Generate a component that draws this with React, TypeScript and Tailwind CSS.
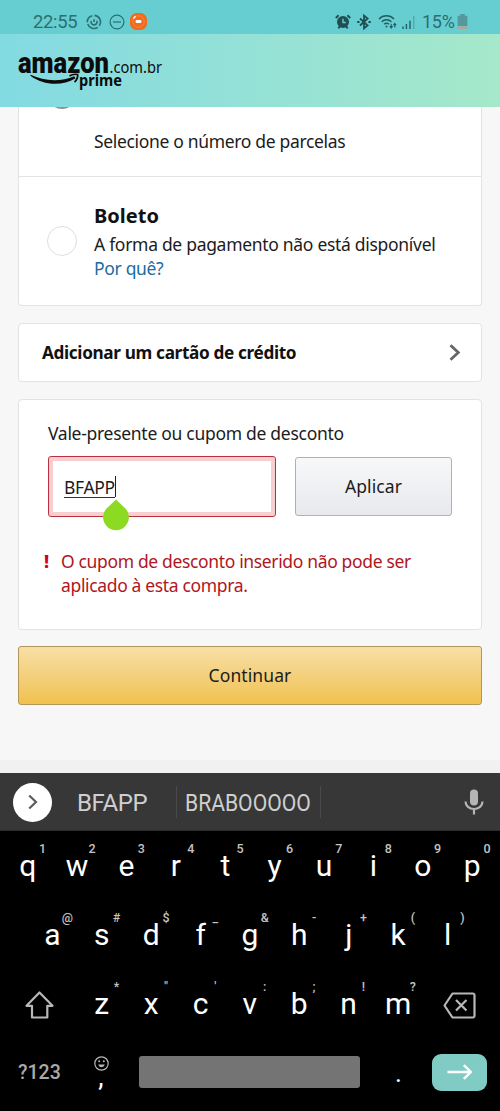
import { ReactNode } from 'react'

interface KeyDef {
  letter: string
  hint: string
}

const toKeys = (letters: string, hints: string): KeyDef[] =>
  letters.split('').map((letter, i) => ({ letter, hint: hints[i] }))

const ROW_1 = toKeys('qwertyuiop', '1234567890')
const ROW_2 = toKeys('asdfghjkl', '@#$_&-+()')
const ROW_3 = toKeys('zxcvbnm', '*"\':;!?')

function StatusBar() {
  return (
    <div className="flex h-[34px] items-center bg-[#66cdd0] pt-[9px] pl-[33px] pr-[32px] font-[Roboto,sans-serif] text-[#2c6e72]">
      <span className="w-[53px] text-[18.400px] leading-6 whitespace-nowrap">22:55</span>
      <svg className="h-[16px] w-[16px]" viewBox="0 0 16 16" fill="none" stroke="#2c6e72" strokeWidth="1.6">
        <path d="M8.500 1.400a6.600 6.600 0 0 1 4.800 10.300M11.800 13.300A6.600 6.600 0 0 1 1.700 10M1.300 8.200A6.600 6.600 0 0 1 6.300 1.700" />
        <path d="M5.200 7a3 3 0 1 0 5.600-.3M8 5.200v2.900" />
      </svg>
      <svg className="ml-[7px] h-[16px] w-[16px]" viewBox="0 0 16 16" fill="none" stroke="#2c6e72" strokeWidth="1.2">
        <circle cx="8" cy="8" r="6.900" />
        <path d="M4 8h8" />
      </svg>
      <svg className="ml-[5px] h-[17px] w-[17px]" viewBox="0 0 17 17" fill="none">
        <rect width="17" height="17" rx="6.500" fill="#f26a1b" />
        <circle cx="8.500" cy="8.500" r="5.700" stroke="#f58a45" strokeWidth="0.900" />
        <path d="M3.300 5.400 5.600 3.200" stroke="#fff" strokeWidth="1.400" />
        <rect x="5.600" y="7" width="5.800" height="3" rx="1" fill="#fff" />
      </svg>

      <div className="ml-auto flex items-center">
        <svg className="h-[16px] w-[16px]" viewBox="0 0 16 16" fill="none">
          <circle cx="8" cy="8" r="6" fill="#1f4f52" />
          <path d="M.8 4 3.600 1.300M15.200 4l-2.800-2.700M3.300 14.400l1.600-2M12.700 14.400l-1.600-2" stroke="#1f4f52" strokeWidth="1.900" />
          <path d="M8 4.800v3.700h2.800" stroke="#66cdd0" strokeWidth="1.400" />
        </svg>
        <svg className="ml-[6px] h-[16px] w-[14px]" viewBox="0 0 14 16" fill="none" stroke="#1f4f52" strokeWidth="1.800">
          <path d="m3 4.500 7.600 7L7 14.400V1.600l3.600 2.900L3 11.500" />
          <path d="M.2 8h2.300M11.500 8h2.300" />
        </svg>
        <svg className="ml-[7px] h-[16px] w-[20px]" viewBox="0 0 20 16" fill="none" stroke="#1f5f63" strokeWidth="1.500">
          <path d="M1 5c4-4.200 11-4.200 15 0M3.700 7.800c2.700-2.700 7-2.700 9.700 0M6.200 10.300c1.300-1.300 3.400-1.300 4.700 0" />
          <circle cx="8.500" cy="12.500" r="1" fill="#1f5f63" stroke="none" />
          <path d="M11.200 12h4l-2 2.900zM14.800 11.300h4l-2-2.900z" fill="#1f5f63" stroke="none" />
          <path d="M13.200 9.800v3M16.800 10.500v3" strokeWidth="1.100" />
        </svg>
        <svg className="ml-[4px] h-[14px] w-[13px]" viewBox="0 0 13 14" fill="#1f5f63">
          <path d="M.3 11.400h1.400V14H.3zM3.700 9h1.400v5H3.700zM7.300 5.800h1.400V14H7.300z" />
          <path d="M11 1h1.400v13H11z" opacity=".3" />
        </svg>
        <span className="ml-[7px] w-[35px] text-[18px] leading-6 tracking-[-0.300px] whitespace-nowrap">15%</span>
        <svg className="h-[15px] w-[11px]" viewBox="0 0 11 15">
          <path d="M3.300 0h4.400v1.700H3.300zM1.800 1.700h7.400a1.200 1.200 0 0 1 1.200 1.200V12H.6V2.900a1.200 1.200 0 0 1 1.200-1.200z" fill="#53999d" />
          <path d="M.6 12.400h9.800v1.100A1.200 1.200 0 0 1 9.200 14.700H1.800A1.200 1.200 0 0 1 .6 13.500z" fill="#c99a83" />
        </svg>
      </div>
    </div>
  )
}

function Logo() {
  return (
    <svg className="h-[57px] w-[170px]" viewBox="0 -11 170 57" fill="#0c0c0c">
      <text x="0" y="23" fontFamily="Roboto, sans-serif" fontWeight="900" fontSize="29.500" textLength="91" lengthAdjust="spacingAndGlyphs">amazon</text>
      <text x="91.500" y="23" fontFamily="Noto Sans, sans-serif" fontSize="16.500" textLength="52.500" lengthAdjust="spacingAndGlyphs">.com.br</text>
      <text x="61" y="36" fontFamily="Noto Sans, sans-serif" fontWeight="700" fontSize="16.500" textLength="43" lengthAdjust="spacingAndGlyphs">prime</text>
      <path d="M12.600 24.800C26 31.400 43 32 56.200 26.200l1.400 2C44 36.200 26 35.600 12.400 25.700z" />
      <path d="M51.500 26c2.600-1.700 6-1.900 8.100-1.500.3 2.500-.8 5.400-3 7.600" fill="none" stroke="#0c0c0c" strokeWidth="1.700" />
    </svg>
  )
}

function Card({ className, children }: { className: string; children: ReactNode }) {
  return (
    <div className={`rounded-[4px] border border-[#e3e3e3] bg-white ${className}`}>
      {children}
    </div>
  )
}

function Key({ letter, hint }: KeyDef) {
  return (
    <button type="button" className="relative h-[69px] w-[49.400px] text-center text-[30px] leading-[69px] text-white">
      {letter}
      <span className="absolute top-[5px] left-[27.500px] w-6 text-center text-[12.500px] leading-[26px] font-medium text-[#c4c4c4]">
        {hint}
      </span>
    </button>
  )
}

function Keyboard() {
  return (
    <div className="flex-1 bg-black font-[Roboto,sans-serif] tracking-normal">
      {/* suggestion strip */}
      <div className="flex h-[58px] items-center border-b border-[#2b2b2b] bg-[#373737] pt-px pl-[13px] pr-[16px] text-[24px] text-[#cfcfcf]">
        <span className="flex h-[39px] w-[39px] items-center justify-center rounded-full bg-white">
          <svg className="h-[16px] w-[10px]" viewBox="0 0 10 16" fill="none" stroke="#5c5c5c" strokeWidth="2.200">
            <path d="m1.200 1.500 6.800 6.500-6.800 6.500" />
          </svg>
        </span>
        <span className="ml-[25px] w-[99px] pt-[2px] tracking-[-0.400px] whitespace-nowrap">BFAPP</span>
        <span className="h-[32px] w-px bg-[#4a4a4a]" />
        {/* long suggestions are squeezed to fit their slot */}
        <span className="ml-[8px] w-[135px] origin-left scale-x-[0.880] pt-[2px] whitespace-nowrap">BRABOOOOO</span>
        <span className="h-[32px] w-px bg-[#4a4a4a]" />
        <svg className="ml-auto h-[26px] w-[20px]" viewBox="0 0 20 26" fill="none">
          <rect x="6" y="0.500" width="8" height="16" rx="4" fill="#b5b5b5" />
          <path d="M1.500 12.500a8.500 7.500 0 0 0 17 0M10 20v5.500" stroke="#b5b5b5" strokeWidth="2.200" />
        </svg>
      </div>

      <div className="flex justify-center">{ROW_1.map(k => <Key key={k.letter} {...k} />)}</div>
      <div className="flex justify-center">{ROW_2.map(k => <Key key={k.letter} {...k} />)}</div>
      <div className="flex">
        <div className="flex h-[69px] w-[77px] items-center pl-[25px]">
          <svg className="mt-[2px] h-[28px] w-[29px]" viewBox="0 0 29 28" fill="none" stroke="#b8b8b8" strokeWidth="2.200" strokeLinejoin="round">
            <path d="M14.500 1.500 27.500 14.800h-5.200V26.500H7V14.800H1.500z" />
          </svg>
        </div>
        {ROW_3.map(k => <Key key={k.letter} {...k} />)}
        <div className="flex h-[69px] flex-1 items-center pl-[20.500px]">
          <svg className="mt-[4px] h-[27px] w-[33px]" viewBox="0 0 33 27" fill="none" stroke="#b8b8b8" strokeWidth="2.200" strokeLinejoin="round">
            <path d="M9.500 1.500h20.300a1.700 1.700 0 0 1 1.700 1.700v20.600a1.700 1.700 0 0 1-1.700 1.700H9.500L1.500 13.500z" />
            <path d="m13 8 10.500 10.500M23.500 8 13 18.500" />
          </svg>
        </div>
      </div>
      <div className="flex h-[68px] items-center pl-[18px] pr-[13px]">
        <span className="w-[75px] pt-[2px] text-[19.500px] font-medium whitespace-nowrap text-[#a9a9a9]">?123</span>
        <div className="-mt-[6px] flex w-[16px] flex-col items-center">
          <svg className="h-[15px] w-[15px]" viewBox="0 0 15 15" fill="none" stroke="#b8b8b8" strokeWidth="1.200">
            <circle cx="7.500" cy="7.500" r="6.700" />
            <path d="M4.200 8.600a3.400 3.400 0 0 0 6.600 0z" fill="#b8b8b8" stroke="none" />
            <circle cx="5.200" cy="5.300" r="1" fill="#b8b8b8" stroke="none" />
            <circle cx="9.800" cy="5.300" r="1" fill="#b8b8b8" stroke="none" />
          </svg>
          <span className="text-[27px] leading-[12px] text-white">,</span>
        </div>
        <span className="ml-[30px] h-[32px] w-[221px] rounded-[3px] bg-[#747474]" />
        <span className="ml-[35px] mt-[2px] w-[8px] text-[26px] leading-[30px] text-white">.</span>
        <span className="ml-auto flex h-[37px] w-[55px] items-center justify-center rounded-[9px] bg-[#80cbc4]">
          <svg className="h-[16px] w-[26px]" viewBox="0 0 26 16" fill="none" stroke="#fff" strokeWidth="2.400">
            <path d="M.5 8h23M16.800 1.200 23.800 8l-7 6.800" />
          </svg>
        </span>
      </div>
    </div>
  )
}

export default function App() {
  return (
    <div className="flex h-[1111px] w-[500px] flex-col overflow-hidden bg-[#f7f7f7] font-['Noto_Sans',sans-serif] text-[17.500px] leading-[24px] tracking-[-0.330px] text-[#1c1c1c]">
      <StatusBar />
      <header className="h-[73px] bg-linear-to-r from-[#82dae2] to-[#a5e8ca] pt-[5px] pl-[18px] tracking-normal">
        <Logo />
      </header>

      <main className="h-[653px] px-[18px]">
        <div className="rounded-b-[4px] border-x border-b border-[#e3e3e3] bg-white">
          {/* bottom edge of the radio scrolled under the header */}
          <div className="h-[22px] overflow-hidden pl-[28px]">
            <div className="-mt-[28px] h-[30px] w-[30px] rounded-full border-2 border-[#8b9496]" />
          </div>
          <p className="h-[47px] pl-[75px] whitespace-nowrap">Selecione o número de parcelas</p>
          <div className="flex h-[129px] items-start border-t border-[#e3e3e3] pl-[28px]">
            <span className="mt-[49px] h-[30px] w-[30px] rounded-full border border-[#dedede]" />
            <div className="ml-[17px] pt-[26px] whitespace-nowrap">
              <h2 className="text-[20px] leading-[25px] font-bold tracking-normal text-[#111]">Boleto</h2>
              <p className="mt-[4px] tracking-[-0.300px]">A forma de pagamento não está disponível</p>
              <a className="block text-[#1b6ba3]">Por quê?</a>
            </div>
          </div>
        </div>

        <Card className="mt-[17px] flex h-[59px] items-center justify-between pl-[23px] pr-[20px]">
          <span className="text-[17.200px] font-bold tracking-[-0.350px] whitespace-nowrap text-[#111]">Adicionar um cartão de crédito</span>
          <svg className="h-[17px] w-[12px]" viewBox="0 0 12 17" fill="none" stroke="#666" strokeWidth="2.800">
            <path d="m1.500 1.200 7.800 7.300-7.800 7.300" />
          </svg>
        </Card>

        <Card className="mt-[17px] h-[231px] pt-[21px] pl-[29px]">
          <label className="block tracking-[-0.290px] whitespace-nowrap">Vale-presente ou cupom de desconto</label>
          <div className="mt-[11px] flex items-start">
            <div className="relative flex h-[61px] w-[228px] items-center rounded-[3px] border border-[#b9303f] pl-[15px] shadow-[inset_0_0_0_4px_#f8cfd0]">
              <span className="mt-px border-b border-[#333] leading-[20px] tracking-[-0.350px]">BFAPP</span>
              <span className="h-[21px] w-px bg-[#222]" />
              {/* cursor handle */}
              <svg className="absolute top-[42px] left-[53px] h-[32px] w-[28px]" viewBox="0 0 28 32" fill="#8cdb22">
                <path d="M14 .5 23.200 9.200a12.900 12.900 0 1 1-18.400 0z" />
              </svg>
            </div>
            <button type="button" className="mt-px ml-[19px] h-[59px] w-[157px] rounded-[3px] border border-[#adb1b8] bg-linear-to-b from-[#f7f8fa] to-[#e7e9ec] pb-[2px] tracking-[0.100px]">
              Aplicar
            </button>
          </div>
          <div className="mt-[32px] flex text-[#b0161e]">
            <span className="-ml-[4px] w-[17px] text-[18px] font-extrabold text-[#d0021b]">!</span>
            <p className="tracking-[-0.350px] whitespace-nowrap">
              O cupom de desconto inserido não pode ser
              <br />
              aplicado à esta compra.
            </p>
          </div>
        </Card>

        <button type="button" className="mt-[16px] h-[59px] w-full rounded-[3px] border border-[#b2965a] bg-linear-to-b from-[#f7dfa5] to-[#f0c14b] pb-[2px] tracking-[0.100px]">
          Continuar
        </button>
      </main>
      <footer className="h-[13px] bg-[#f1f1f1]" />

      <Keyboard />
    </div>
  )
}
